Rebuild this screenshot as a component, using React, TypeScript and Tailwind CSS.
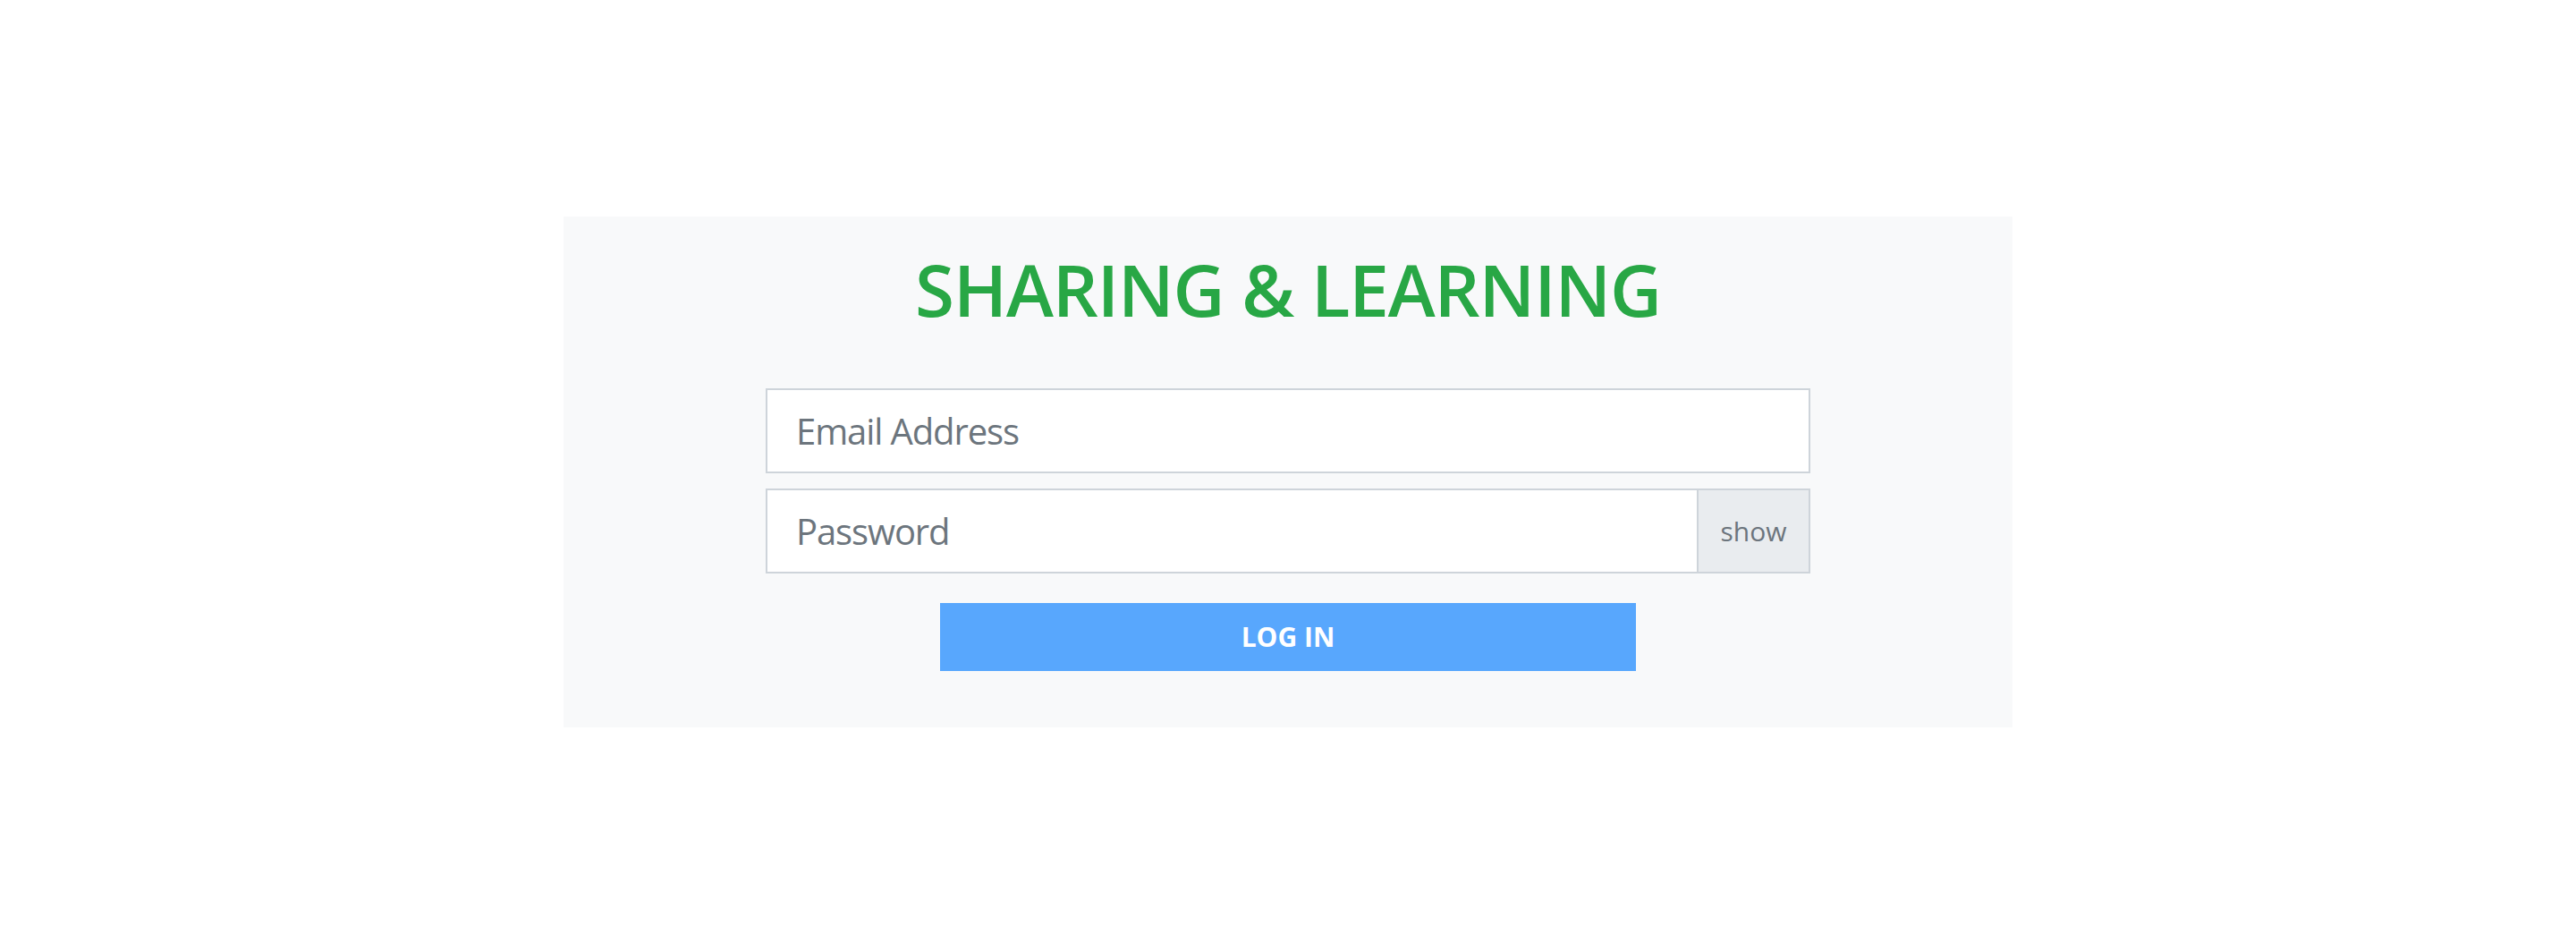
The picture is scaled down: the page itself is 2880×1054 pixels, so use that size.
import React, { useState } from "react";

const font = { fontFamily: '"Open Sans", "Noto Sans", sans-serif' };

export default function App() {
  const [show, setShow] = useState(false);

  return (
    <div
      className="flex h-screen w-full items-center justify-center bg-white"
      style={font}
    >
      <div className="flex w-[1620px] flex-col items-center bg-[#f8f9fa] pt-[41px] pb-[63px]">
        <h1 className="text-[80px] font-semibold leading-none tracking-[-1.1px] text-[#28a745]">
          SHARING &amp; LEARNING
        </h1>

        <form className="mt-[71px] flex w-[1168px] flex-col items-center">
          <input
            type="email"
            placeholder="Email Address"
            className="h-[95px] w-full border-2 border-[#ced4da] bg-white px-[32px] text-[40px] tracking-[-1.1px] text-[#495057] outline-none placeholder:text-[#6c757d]"
          />
          <div className="mt-[17px] flex h-[95px] w-full">
            <input
              type={show ? "text" : "password"}
              placeholder="Password"
              className="h-full min-w-0 flex-1 border-2 border-[#ced4da] bg-white px-[32px] text-[40px] tracking-[-1.1px] text-[#495057] outline-none placeholder:text-[#6c757d]"
            />
            <button
              type="button"
              onClick={() => setShow(!show)}
              className="-ml-[2px] flex h-full w-[127px] items-center justify-center border-2 border-[#ced4da] bg-[#e9ecef] text-[30px] text-[#6c757d]"
            >
              show
            </button>
          </div>
          <button
            type="submit"
            className="mt-[33px] h-[76px] w-[778px] bg-[#58a7fd] text-[30px] font-bold text-white"
          >
            LOG IN
          </button>
        </form>
      </div>
    </div>
  );
}
